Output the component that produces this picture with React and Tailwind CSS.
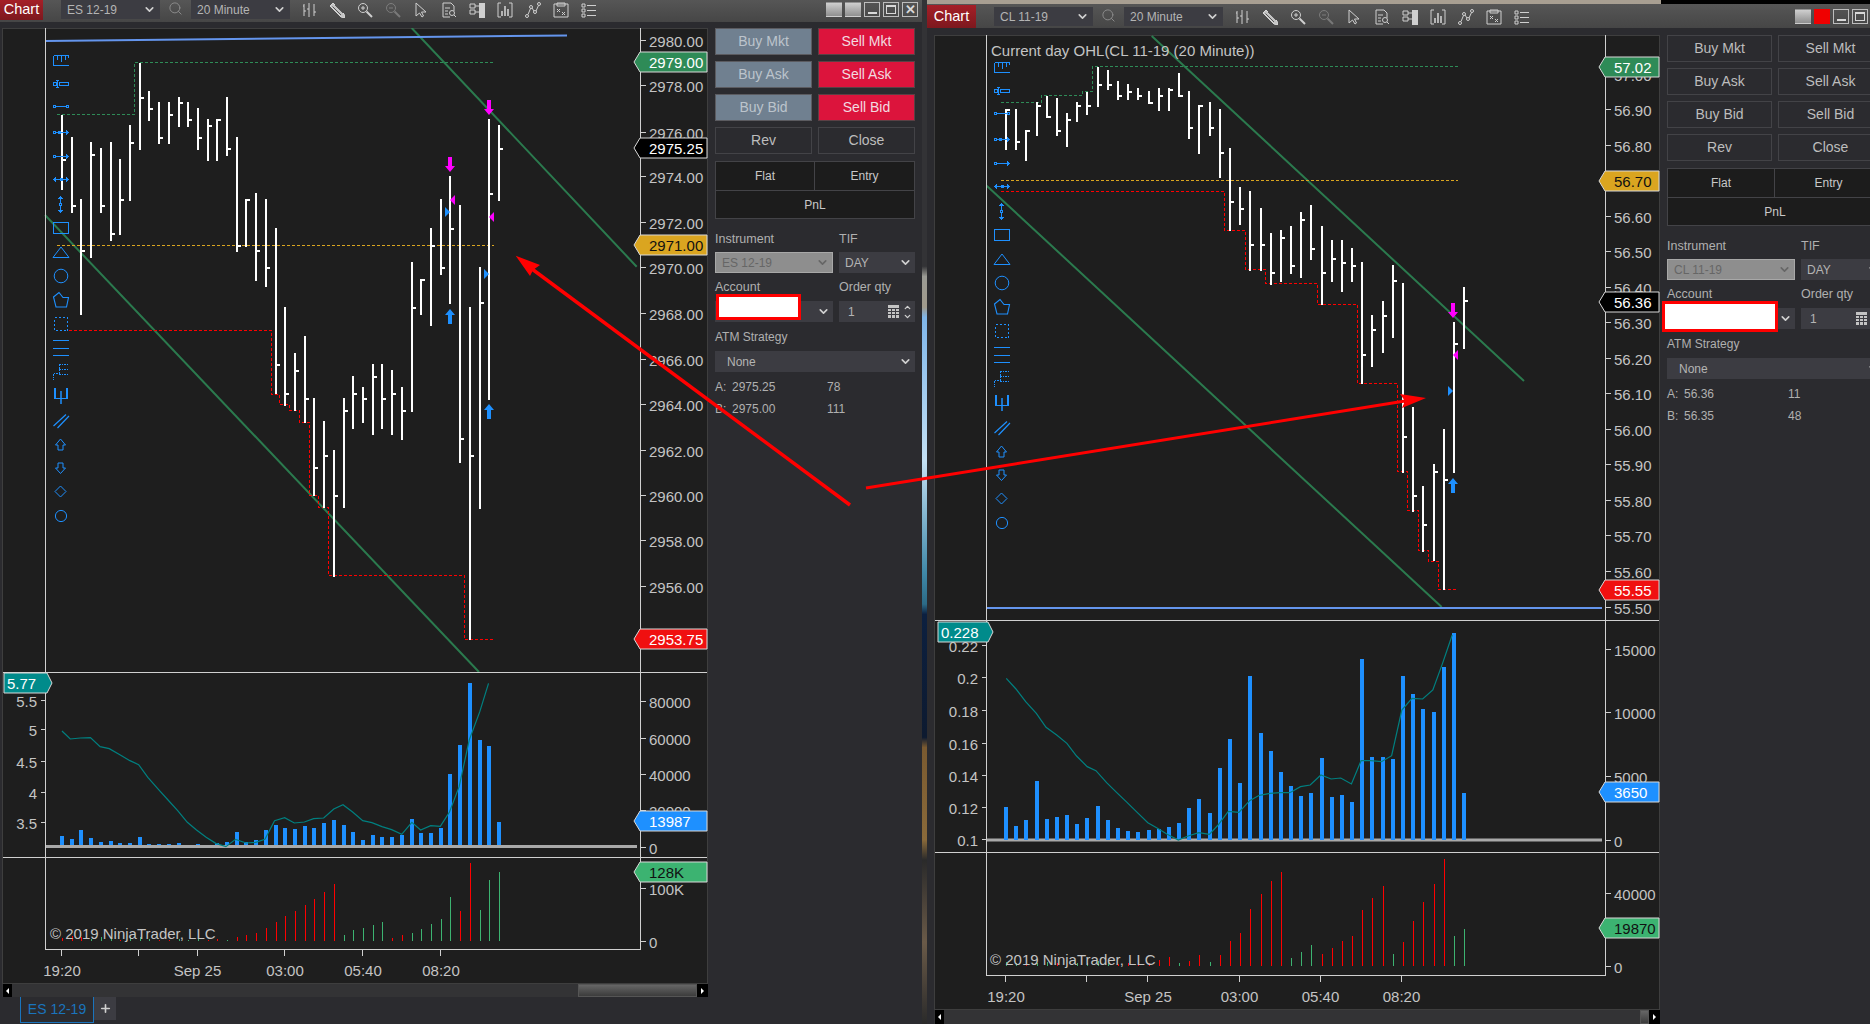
import React from "react";
import { ChevronDown, ChevronUp, Search, ZoomIn, ZoomOut, Plus } from "lucide-react";

const TEXT = "#c4c4c4";
const GREEN_LINE = "#2e8b57";

// bars are [top, bottom, close tick], page coordinates
const leftBars = [
  [115, 190, 160], [137, 213, 206], [199, 315, 251], [142, 258, 155], [148, 213, 206], [142, 241, 234],
  [159, 235, 200], [125, 201, 143], [63, 150, 98], [91, 121, 109], [102, 144, 138], [102, 144, 115],
  [97, 127, 103], [102, 127, 120], [108, 150, 138], [119, 161, 126], [119, 161, 120], [97, 156, 149],
  [137, 252, 246], [199, 247, 200], [193, 281, 251], [199, 287, 268], [228, 394, 365], [307, 406, 394],
  [353, 411, 371], [336, 423, 399], [398, 496, 468], [421, 508, 456], [450, 577, 496], [398, 508, 411],
  [376, 429, 394], [387, 423, 399], [364, 435, 377], [364, 429, 399], [370, 435, 394], [387, 440, 411],
  [262, 412, 308], [279, 315, 280], [228, 326, 246], [199, 275, 268], [176, 304, 229], [205, 463, 439],
  [307, 640, 456], [267, 509, 303], [119, 400, 194], [125, 201, 149],
];

const rightBars = [
  [109, 150, 110], [109, 150, 142], [130, 161, 131], [102, 136, 106], [96, 118, 117], [98, 136, 131],
  [113, 147, 120], [102, 122, 106], [92, 115, 106], [67, 107, 85], [70, 90, 85], [81, 100, 96],
  [84, 100, 92], [88, 100, 96], [91, 104, 103], [88, 111, 96], [88, 111, 90], [73, 97, 96],
  [91, 139, 128], [105, 154, 106], [102, 136, 128], [109, 178, 153], [148, 231, 202], [187, 225, 209],
  [191, 271, 245], [208, 271, 245], [233, 285, 273], [230, 282, 238], [226, 274, 266], [212, 278, 220],
  [205, 260, 249], [226, 305, 273], [240, 282, 259], [240, 292, 263], [248, 282, 266], [262, 384, 355],
  [315, 367, 330], [301, 353, 316], [265, 338, 281], [283, 473, 437], [407, 512, 496], [486, 552, 525],
  [464, 561, 472], [429, 590, 480], [322, 473, 344], [287, 349, 301],
];

const leftVolume = [528, 537, 510, 534, 546, 543, 549, 549, 532, 552, 552, 552, 549, 555, 552, 555, 550, 546, 516, 546, 540, 510, 495, 504, 507, 498, 504, 489, 480, 495, 516, 540, 525, 531, 531, 525, 477, 519, 519, 504, 342, 255, 69, 240, 258, 486];
const rightVolume = [591, 648, 630, 513, 627, 621, 615, 642, 624, 588, 630, 654, 663, 666, 660, 657, 651, 639, 594, 567, 609, 474, 387, 519, 198, 369, 423, 486, 528, 558, 549, 444, 561, 555, 576, 147, 441, 441, 447, 198, 252, 297, 306, 171, 69, 549];

const leftTeal = [[135, 213], [153, 237], [175, 234], [197, 233], [218, 260], [238, 266], [262, 285], [283, 302], [302, 314], [322, 352], [345, 388], [366, 420], [387, 452], [408, 487], [428, 510], [449, 532], [470, 550], [492, 560], [513, 538], [536, 549], [557, 547], [577, 538], [598, 482], [620, 473], [641, 489], [663, 486], [683, 476], [705, 474], [727, 447], [747, 434], [768, 456], [790, 482], [810, 488], [832, 500], [853, 509], [875, 523], [897, 487], [916, 510], [938, 497], [959, 499], [979, 456], [1000, 380], [1022, 240], [1045, 155], [1064, 70]];
const rightTeal = [[178, 205], [198, 237], [218, 275], [240, 310], [260, 352], [282, 375], [303, 400], [323, 438], [345, 470], [363, 482], [385, 518], [406, 548], [427, 577], [448, 607], [470, 638], [490, 655], [510, 673], [533, 690], [553, 678], [575, 668], [597, 673], [615, 645], [636, 604], [658, 607], [680, 572], [700, 556], [722, 550], [742, 548], [763, 548], [785, 530], [805, 525], [827, 495], [848, 507], [868, 504], [890, 522], [910, 452], [930, 452], [952, 455], [973, 437], [994, 300], [1015, 265], [1037, 267], [1058, 240], [1078, 160], [1098, 75]];

const leftDelta = [833, 828, 830, 838, 830, 832, 840, 832, 832, 838, 840, 840, 838, 840, 836, 840, 838, 840, 830, 825, 818, 803, 785, 768, 753, 735, 717, 696, 672, 825, 810, 804, 795, 786, 834, 825, 819, 807, 792, 777, 711, 753, 609, 750, 660, 636];
const leftDeltaColors = "rrrgggrgggrrgggrrgrrrrrrrrrrrgggggrrgggggrrggg";
const rightDelta = [1056, 1058, 1062, 1060, 1055, 1060, 1060, 1060, 1060, 1052, 1060, 1062, 1060, 1060, 1058, 1050, 1042, 1060, 1052, 1035, 1056, 1035, 993, 969, 897, 852, 813, 786, 1044, 1026, 1005, 1032, 1014, 993, 978, 900, 864, 828, 1032, 996, 933, 876, 822, 747, 978, 957];
const rightDeltaColors = "ggrggrrggggrrrrrrgrrgrrrrrrrgggrrrrrrrgrrrrrgg";

const leftChart = {
  viewBox: "2 28 706 956", width: 706, height: 956,
  box: [2, 28, 708, 984],
  axisL: 45.5, axisR: 640.5, top: 28, div1: 672.5, div2: 857.5, bottom: 949.5,
  bars: leftBars, barX: (i) => Math.round(62 + 9.71 * i),
  volume: leftVolume.map((v) => 660 + v / 3), volumeBase: 845, barW: 4,
  grayLine: [637, 846.5],
  teal: leftTeal.map(([x, y]) => [x / 2.178, 660 + y / 3]),
  delta: leftDelta.map((v) => 660 + v / 3), deltaBase: 941, deltaColors: leftDeltaColors,
  blueLine: [45, 41, 567, 35.5],
  channels: [[45, 215, 479, 672], [411.7, 28, 636.7, 266.7]],
  greenStep: "M57 114.5H134.5V62.5H493",
  redStep: "M69 330.5H271.5V394.5H279.5V404.5H289.5V410.5H299.5V422.5H309.5V495.5H318.5V507.5H328.5V575.5H464.5V639.5H494",
  orangeY: 245.5, orangeX: [57, 494],
  prices: [["2980.00", 41.5], ["2978.00", 86.5], ["2976.00", 133], ["2974.00", 177.5], ["2972.00", 223], ["2970.00", 268.5], ["2968.00", 314], ["2966.00", 360], ["2964.00", 405.5], ["2962.00", 451], ["2960.00", 496], ["2958.00", 541.5], ["2956.00", 587]],
  priceX: 649,
  tags: [
    { text: "2979.00", y: 52, x: 634, fill: "#2e8b57", color: "#fff" },
    { text: "2975.25", y: 138, x: 634, fill: "#000", color: "#fff" },
    { text: "2971.00", y: 235, x: 634, fill: "#daa520", color: "#111" },
    { text: "2953.75", y: 629, x: 634, fill: "#f01010", color: "#fff" },
    { text: "13987", y: 811, x: 634, fill: "#1e90ff", color: "#fff" },
    { text: "128K", y: 862, x: 634, fill: "#3cb371", color: "#111" },
  ],
  tagEnd: 707,
  indicatorTag: { text: "5.77", x1: 4, x2: 52, y: 673 },
  indicatorLabels: [["5.5", 701], ["5", 730], ["4.5", 762], ["4", 793], ["3.5", 823]],
  indicatorRight: 37,
  volumeLabels: [["80000", 702], ["60000", 739], ["40000", 775], ["20000", 811], ["0", 848], ["100K", 889], ["0", 942]],
  dates: [["19:20", 62], ["Sep 25", 197.5], ["03:00", 285], ["05:40", 363], ["08:20", 441]],
  dateTicks: [61.5, 138.5, 197.5, 284.5, 362.5, 440.5],
  dateY: 970,
  copyright: [50, 933],
  signals: {
    down: [[450, 157], [489, 100]], up: [[450, 309], [489, 404]],
    left: [[450, 200], [489, 217]], right: [[450, 212], [489, 274]],
  },
  tools: "translate(0 0)",
};

const rightChart = {
  viewBox: "934 35 726 975", width: 726, height: 975,
  box: [934, 35, 1660, 1010],
  axisL: 986.5, axisR: 1605.5, top: 35, div1: 620.5, div2: 852.5, bottom: 975.5,
  bars: rightBars, barX: (i) => Math.round(1006 + 10.18 * i),
  volume: rightVolume.map((v) => 610 + v / 3), volumeBase: 840, barW: 4,
  grayLine: [1602, 840],
  teal: rightTeal.map(([x, y]) => [920 + x / 2.063, 610 + y / 3]),
  delta: rightDelta.map((v) => 610 + v / 3), deltaBase: 966, deltaColors: rightDeltaColors,
  blueLine: [986, 608, 1602, 608],
  channels: [[1151.7, 36, 1524, 381], [986.7, 185.7, 1441.7, 607]],
  greenStep: "M1001 102.5H1041.5V95.5H1082.5V91.5H1092.5V66.5H1458",
  redStep: "M1001 191.5H1224.5V230.5H1245.5V269.5H1265.5V283.5H1317.5V304.5H1357.5V383.5H1397.5V471.5H1407.5V510.5H1418.5V550.5H1428.5V561.5H1438.5V589.5H1457",
  orangeY: 180.5, orangeX: [1001, 1458],
  prices: [["57.00", 75.5], ["56.90", 110.5], ["56.80", 146.5], ["56.60", 217.5], ["56.50", 252.5], ["56.40", 288], ["56.30", 323], ["56.20", 359], ["56.10", 394.5], ["56.00", 430.5], ["55.90", 465.5], ["55.80", 501], ["55.70", 536.5], ["55.60", 572], ["55.50", 608]],
  priceX: 1614,
  tags: [
    { text: "57.02", y: 57, x: 1599, fill: "#2e8b57", color: "#fff" },
    { text: "56.70", y: 171, x: 1599, fill: "#daa520", color: "#111" },
    { text: "56.36", y: 292, x: 1599, fill: "#000", color: "#fff" },
    { text: "55.55", y: 580, x: 1599, fill: "#f01010", color: "#fff" },
    { text: "3650", y: 782, x: 1599, fill: "#1e90ff", color: "#fff" },
    { text: "19870", y: 918, x: 1599, fill: "#3cb371", color: "#111" },
  ],
  tagEnd: 1659,
  indicatorTag: { text: "0.228", x1: 938, x2: 993, y: 622 },
  indicatorLabels: [["0.22", 646], ["0.2", 678], ["0.18", 711], ["0.16", 744], ["0.14", 776], ["0.12", 808], ["0.1", 840]],
  indicatorRight: 978,
  volumeLabels: [["15000", 650], ["10000", 713], ["5000", 777], ["0", 841], ["40000", 894], ["0", 967]],
  dates: [["19:20", 1006], ["Sep 25", 1148], ["03:00", 1239.5], ["05:40", 1320.5], ["08:20", 1401.5]],
  dateTicks: [1005.5, 1086.5, 1147.5, 1239.5, 1320.5, 1401.5],
  dateY: 996,
  copyright: [990, 959],
  title: ["Current day OHL(CL 11-19 (20 Minute))", 991, 50],
  signals: { down: [[1453, 303]], up: [[1453, 478]], left: [[1453, 355]], right: [[1453, 391]] },
  tools: "translate(941 7)",
};

// the drawing tool column, blue icons
function ToolIcons({ transform }) {
  const blue = "#1e90ff";
  return (
    <g transform={transform} fill="none" stroke={blue} strokeWidth="1" shapeRendering="crispEdges">
      <path d="M53.5 55.5H68.5V58M53.5 55.5V65.5H69M57 56V60M61 56V62M65 56V60" />
      <rect x="53.5" y="82.5" width="3" height="3" />
      <path d="M57.5 80V88M56 80.5H59M56 87.5H59" />
      <rect x="59.5" y="82.5" width="9" height="3" />
      <rect x="53.5" y="105.5" width="2" height="2" /><path d="M56 106.5H66" /><rect x="66.5" y="105.5" width="2" height="2" />
      <rect x="53.5" y="131.5" width="2" height="2" /><rect x="58.5" y="131.5" width="2" height="2" /><path d="M56 132.5H68M66 130.5L68.5 132.5L66 134.5" />
      <rect x="53.5" y="155.5" width="2" height="2" /><path d="M56 156.5H68M66 154.5L68.5 156.5L66 158.5" />
      <path d="M53.5 179.5H68.5M56 177.5L53.5 179.5L56 181.5M66 177.5L68.5 179.5L66 181.5" /><rect x="60" y="178.5" width="2" height="2" />
      <path d="M60.5 197V212M58.5 199L60.5 197L62.5 199M58.5 210L60.5 212L62.5 210" /><rect x="59.5" y="203.5" width="2" height="2" fill="#1e1e1e" />
      <rect x="53.5" y="222.5" width="15" height="11" />
      <path d="M61 247L69 257.5H53Z" shapeRendering="auto" />
      <circle cx="61" cy="276" r="6.8" shapeRendering="auto" />
      <path d="M53.5 297L59 292.5L63 297.5H68.5L66.5 307H56Z" shapeRendering="auto" strokeWidth="1.1" />
      <rect x="54.5" y="317.5" width="13" height="13" strokeDasharray="2 2" />
      <path d="M53 340.5H69M53 348H69M53 355.5H69" />
      <path d="M59 364.5H69M59 369.5H69M59 374.5H69M59 364.5V374.5M53.5 373.5H58M53.5 374V380" strokeDasharray="1.5 1" />
      <path d="M55 388V398.5H67V388" strokeWidth="1.2" /><path d="M61 391V404" strokeWidth="2" opacity="0.75" />
      <path d="M53.5 426L66 414.5M57.5 428L69 416" shapeRendering="auto" strokeWidth="1.2" />
      <path d="M60.5 439L65.5 445H63V450H58V445H55.5Z" shapeRendering="auto" />
      <path d="M58 463H63V468H65.5L60.5 473.5L55.5 468H58Z" shapeRendering="auto" />
      <path d="M60.5 486L66 491.5L60.5 497L55 491.5Z" shapeRendering="auto" />
      <circle cx="61" cy="516" r="5.6" shapeRendering="auto" />
    </g>
  );
}

function PriceTag({ text, x, y, fill, color, end }) {
  return (
    <g>
      <polygon points={`${x},${y + 10} ${x + 6},${y} ${end},${y} ${end},${y + 20} ${x + 6},${y + 20}`} fill={fill} stroke="#d8d8d8" strokeWidth="1" />
      <text x={x + 15} y={y + 10.5} fill={color} fontSize="15" dominantBaseline="central">{text}</text>
    </g>
  );
}

function ChartPlot({ c }) {
  const [bx1, by1, bx2, by2] = c.box;
  const tag = c.indicatorTag;
  return (
    <svg viewBox={c.viewBox} width={c.width} height={c.height} className="block shrink-0">
      <rect x={bx1 + 0.5} y={by1 + 0.5} width={bx2 - bx1 - 1} height={by2 - by1 - 1} fill="#1e1e1e" stroke="#3e3e3e" />

      {/* channels + trend line */}
      {c.channels.map((l, i) => (
        <line key={i} x1={l[0]} y1={l[1]} x2={l[2]} y2={l[3]} stroke={GREEN_LINE} strokeWidth="2" opacity="0.85" />
      ))}
      <line x1={c.blueLine[0]} y1={c.blueLine[1]} x2={c.blueLine[2]} y2={c.blueLine[3]} stroke="#6495ed" strokeWidth="2" />

      {/* day open/high/low */}
      <path d={c.greenStep} fill="none" stroke={GREEN_LINE} strokeDasharray="3 2" shapeRendering="crispEdges" />
      <path d={c.redStep} fill="none" stroke="#ff0000" strokeDasharray="3 2" shapeRendering="crispEdges" />
      <line x1={c.orangeX[0]} y1={c.orangeY} x2={c.orangeX[1]} y2={c.orangeY} stroke="#daa520" strokeDasharray="3 2" shapeRendering="crispEdges" />

      {/* price bars */}
      {c.bars.map(([t, b, k], i) => {
        const x = c.barX(i);
        return (
          <g key={i} fill="#fff" shapeRendering="crispEdges">
            <rect x={x - 1} y={t} width="2" height={b - t} />
            <rect x={x + 1} y={k - 1} width="3" height="2" />
          </g>
        );
      })}

      <ToolIcons transform={c.tools} />

      {/* trade markers */}
      {c.signals.down.map(([x, y], i) => (
        <polygon key={i} fill="#ff00ff" points={`${x - 2},${y} ${x + 2},${y} ${x + 2},${y + 9} ${x + 5},${y + 9} ${x},${y + 15} ${x - 5},${y + 9} ${x - 2},${y + 9}`} />
      ))}
      {c.signals.up.map(([x, y], i) => (
        <polygon key={i} fill="#1e90ff" points={`${x - 2},${y + 15} ${x + 2},${y + 15} ${x + 2},${y + 6} ${x + 5},${y + 6} ${x},${y} ${x - 5},${y + 6} ${x - 2},${y + 6}`} />
      ))}
      {c.signals.left.map(([x, y], i) => (
        <polygon key={i} fill="#ff00ff" points={`${x},${y} ${x + 5},${y - 5} ${x + 5},${y + 5}`} />
      ))}
      {c.signals.right.map(([x, y], i) => (
        <polygon key={i} fill="#1e90ff" points={`${x},${y} ${x - 5},${y - 5} ${x - 5},${y + 5}`} />
      ))}

      {/* volume and teal line */}
      <rect x={c.axisL} y={c.grayLine[1] - 1.5} width={c.grayLine[0] - c.axisL} height="3" fill="#a9a9a9" />
      {c.volume.map((t, i) => (
        <rect key={i} x={c.barX(i) - 2} y={t} width={c.barW} height={c.volumeBase - t} fill="#1e90ff" shapeRendering="crispEdges" />
      ))}
      <polyline points={c.teal.map((p) => p.join(",")).join(" ")} fill="none" stroke="#008080" strokeWidth="1.2" />

      {/* delta */}
      {c.delta.map((t, i) => (
        <rect key={i} x={c.barX(i)} y={t} width="1" height={c.deltaBase - t} fill={c.deltaColors[i] === "r" ? "#ff0000" : "#3cb371"} shapeRendering="crispEdges" />
      ))}

      {/* frame */}
      <g stroke="#d0d0d0" strokeWidth="1" shapeRendering="crispEdges">
        <line x1={c.axisL} y1={c.top} x2={c.axisL} y2={c.bottom} />
        <line x1={c.axisR} y1={c.top} x2={c.axisR} y2={c.bottom} />
        <line x1={bx1 + 1} y1={c.div1} x2={bx2 - 1} y2={c.div1} />
        <line x1={bx1 + 1} y1={c.div2} x2={bx2 - 1} y2={c.div2} />
        <line x1={c.axisL} y1={c.bottom} x2={c.axisR} y2={c.bottom} />
        {c.dateTicks.map((x) => <line key={x} x1={x} y1={c.bottom} x2={x} y2={c.bottom + 6} />)}
        {[...c.prices, ...c.volumeLabels].map(([t, y], i) => <line key={i} x1={c.axisR} y1={Math.round(y - 1.5) + 0.5} x2={c.axisR + 5} y2={Math.round(y - 1.5) + 0.5} />)}
        {c.indicatorLabels.map(([t, y], i) => <line key={i} x1={c.axisL - 5} y1={Math.round(y - 1.5) + 0.5} x2={c.axisL} y2={Math.round(y - 1.5) + 0.5} />)}
      </g>

      {/* axis text */}
      <g fill={TEXT} fontSize="15" dominantBaseline="central">
        {c.prices.map(([t, y]) => <text key={t} x={c.priceX} y={y} dominantBaseline="central">{t}</text>)}
        {c.volumeLabels.map(([t, y], i) => <text key={i} x={c.priceX} y={y} dominantBaseline="central">{t}</text>)}
        {c.indicatorLabels.map(([t, y]) => <text key={t} x={c.indicatorRight} y={y} textAnchor="end" dominantBaseline="central">{t}</text>)}
        {c.dates.map(([t, x]) => <text key={t} x={x} y={c.dateY} textAnchor="middle" dominantBaseline="central">{t}</text>)}
        <text x={c.copyright[0]} y={c.copyright[1]} dominantBaseline="central">© 2019 NinjaTrader, LLC</text>
        {c.title && <text x={c.title[1]} y={c.title[2]} dominantBaseline="central">{c.title[0]}</text>}
      </g>

      {c.tags.map((t) => <PriceTag key={t.text} {...t} end={c.tagEnd} />)}
      <polygon points={`${tag.x1},${tag.y} ${tag.x2 - 5},${tag.y} ${tag.x2},${tag.y + 10} ${tag.x2 - 5},${tag.y + 20} ${tag.x1},${tag.y + 20}`} fill="#008b8b" stroke="#d8d8d8" />
      <text x={tag.x1 + 3} y={tag.y + 10.5} fill="#fff" fontSize="15" dominantBaseline="central">{tag.text}</text>
    </svg>
  );
}

// toolbar glyphs, 16x16
const toolbarIcons = [
  <path key="a" d="M3 2V14M2 4H3M8 1V15M6 7H8M13 2V14M13 10H15M3 9H5" />,
  <g key="b"><path d="M4 1L1 4L12 15L16 16L15 12Z" fill="#c4c4c4" stroke="#d8d8d8" /><path d="M3.5 4.5L12 13M6 3L14 11" stroke="#555" /></g>,
  <g key="c"><circle cx="6" cy="6" r="4.5" /><path d="M4 6H8M6 4V8" /><path d="M9.5 9.5L15 15" strokeWidth="2" /></g>,
  <g key="d" opacity="0.35"><circle cx="6" cy="6" r="4.5" /><path d="M4 6H8" /><path d="M9.5 9.5L15 15" strokeWidth="2" /></g>,
  <path key="e" d="M3 1V14L6.5 11L9 15L10.5 14L8.5 10H13Z" />,
  <g key="f"><path d="M2 1H10L13 4V9M2 1V15H9" /><path d="M4 6H9M4 9H7M4 12H7" /><circle cx="11" cy="11" r="2.5" /><path d="M13 13L15 15" /></g>,
  <g key="g"><path d="M1 2H6V6H1ZM1 8H6V12H1Z" /><path d="M6 4H10M6 10H10" /><rect x="10" y="1" width="6" height="15" fill="#cfcfcf" stroke="none" /></g>,
  <g key="h"><path d="M4 1H1V15H4M12 1H15V15H12" /><path d="M5 9V14M8 4V14M11 7V14" strokeWidth="1.6" /></g>,
  <g key="i"><circle cx="2" cy="14" r="1.5" /><circle cx="6" cy="5" r="1.5" /><circle cx="10" cy="10" r="1.5" /><circle cx="14" cy="2" r="1.5" /><path d="M3 12.5L5.5 6.5M7 6L9 9M11 9L13.5 3.5" /></g>,
  <g key="j"><path d="M1 2H15V15H1Z" /><path d="M4 1H12V4H4ZM4 7L7 10M7 7L4 10M9 10L12 13M12 10L9 13" /></g>,
  <g key="k"><path d="M1 2H4V5H1ZM1 7H4V10H1ZM1 12H4V15H1Z" /><path d="M6 3.5H15M6 8.5H15M6 13.5H15" /></g>,
];

function Dropdown({ label, className }) {
  return (
    <div className={`h-[19px] w-[99px] flex items-center justify-between pl-[6px] pr-[4px] text-[12px] text-[#b4b4b4] bg-[#3c3c42] ${className || ""}`}>
      <span>{label}</span>
      <ChevronDown size={13} strokeWidth={3} className="text-[#d0d0d0]" />
    </div>
  );
}

function WindowButton({ className, children }) {
  return (
    <div className={`w-[16px] h-[15px] flex items-center justify-center border border-[#bdbdbd] ${className || ""}`}>
      {children}
    </div>
  );
}

function TitleBar({ symbol, height, chartWidth, chartHeight, right }) {
  return (
    <div className={`${height} flex items-start bg-gradient-to-b from-[#565656] to-[#464646] shrink-0`}>
      <div className={`${chartWidth} ${chartHeight} flex items-center justify-center text-[14.5px] text-white bg-gradient-to-b from-[#a51f27] to-[#7d181e] shrink-0`}>Chart</div>
      <div className={`flex-1 flex items-start min-w-0 ${right ? "pt-[3px]" : ""}`}>
        <Dropdown label={symbol} className="ml-[18px] shrink-0" />
        <Search size={15} strokeWidth={1.6} className="mx-[8px] mt-[1px] text-[#8a8a8a] shrink-0" />
        <Dropdown label="20 Minute" className="shrink-0" />
        <div className="ml-[11px] flex gap-[12px] shrink-0 mt-[2px]">
          {toolbarIcons.map((icon, i) => (
            <svg key={i} viewBox="0 0 16 16" className="w-[16px] h-[16px]" fill="none" stroke="#cfcfcf" strokeWidth="1">{icon}</svg>
          ))}
        </div>
        <div className={`ml-auto flex gap-[3px] shrink-0 mt-[2px] ${right ? "mr-[2px]" : "mr-[4px]"}`}>
          <WindowButton className="bg-gradient-to-b from-[#cfcfcf] to-[#8f8f8f] border-transparent" />
          <WindowButton className={right ? "bg-[#f00000] border-transparent" : "bg-gradient-to-b from-[#cfcfcf] to-[#8f8f8f] border-transparent"} />
          <WindowButton><span className="w-[9px] h-[2px] mt-[7px] bg-[#d8d8d8]" /></WindowButton>
          <WindowButton><span className="w-[10px] h-[9px] border border-[#d8d8d8] border-t-2" /></WindowButton>
          {!right && <WindowButton><span className="text-[13px] leading-none font-bold text-[#d8d8d8]">✕</span></WindowButton>}
        </div>
      </div>
    </div>
  );
}

function OrderButton({ tone, children }) {
  const tones = {
    buy: "bg-[#708090] text-[#bcc4cc] border-[#5b5b60]",
    sell: "bg-[#dc143c] text-[#f2dbe0] border-[#5b4045]",
    plain: "bg-[#2b2b2f] text-[#bdbdbd] border-[#434347]",
  };
  return <div className={`h-[27px] flex items-center justify-center text-[14px] border ${tones[tone]}`}>{children}</div>;
}

function Field({ children, className }) {
  return <div className={`h-[21px] flex items-center justify-between pl-[6px] pr-[3px] bg-[#3c3c42] text-[12px] text-[#b4b4b4] ${className || ""}`}>{children}</div>;
}

function OrderPanel({ symbol, live, ask, askSize, bid, bidSize, widthClass, fieldCols, accountClass, sizeCol }) {
  const buyTone = live ? "buy" : "plain";
  const sellTone = live ? "sell" : "plain";
  return (
    <div className={`${widthClass} shrink-0 ml-[7px] text-[#b0b0b0]`}>
      <div className="grid grid-cols-2 gap-x-[6px] gap-y-[6px]">
        <OrderButton tone={buyTone}>Buy Mkt</OrderButton>
        <OrderButton tone={sellTone}>Sell Mkt</OrderButton>
        <OrderButton tone={buyTone}>Buy Ask</OrderButton>
        <OrderButton tone={sellTone}>Sell Ask</OrderButton>
        <OrderButton tone={buyTone}>Buy Bid</OrderButton>
        <OrderButton tone={sellTone}>Sell Bid</OrderButton>
        <OrderButton tone="plain">Rev</OrderButton>
        <OrderButton tone="plain">Close</OrderButton>
      </div>

      <div className="mt-[7px] grid grid-cols-2 bg-[#1c1c1c] border border-[#434347] text-[12px] text-[#c8c8c8]">
        <div className="h-[28px] flex items-center justify-center border-r border-[#434347]">Flat</div>
        <div className="h-[28px] flex items-center justify-center">Entry</div>
        <div className="col-span-2 h-[28px] flex items-center justify-center border-t border-[#434347]">PnL</div>
      </div>

      <div className={`mt-[12px] grid ${fieldCols} gap-x-[6px] text-[12.5px]`}>
        <div className="h-[16px] mb-[5px] leading-[16px]">Instrument</div>
        <div className="h-[16px] mb-[5px] leading-[16px]">TIF</div>
        <Field className="!bg-[#8e8e8e] border border-[#a8a8a8] !text-[#666]">
          {symbol}<ChevronDown size={13} strokeWidth={3} className="text-[#666]" />
        </Field>
        <Field>DAY<ChevronDown size={13} strokeWidth={3} className="text-[#d0d0d0]" /></Field>

        <div className="h-[16px] mt-[6px] mb-[6px] leading-[16px]">Account</div>
        <div className="h-[16px] mt-[6px] mb-[6px] leading-[16px]">Order qty</div>
        <div className="relative">
          <Field className="justify-end"><ChevronDown size={13} strokeWidth={3} className="text-[#d0d0d0]" /></Field>
          <div className={`absolute top-[-7px] bg-white border-[3px] border-[#ff0000] ${accountClass}`} />
        </div>
        <Field>
          <span className="pl-[3px]">1</span>
          <span className="flex items-center gap-[4px]">
            <svg viewBox="0 0 11 13" className="w-[11px] h-[13px]" fill="#c4c4c4">
              <path d="M0 0H11V3H0ZM0 4H3V6H0ZM4 4H7V6H4ZM8 4H11V6H8ZM0 7H3V9H0ZM4 7H7V9H4ZM8 7H11V9H8ZM0 10H3V13H0ZM4 10H7V13H4ZM8 10H11V13H8Z" />
            </svg>
            <span className="flex flex-col text-[#d0d0d0]">
              <ChevronUp size={9} strokeWidth={3.5} />
              <ChevronDown size={9} strokeWidth={3.5} />
            </span>
          </span>
        </Field>
      </div>

      <div className="mt-[7px] h-[16px] leading-[16px] text-[12px]">ATM Strategy</div>
      <Field className="mt-[6px] !pl-[12px]">None<ChevronDown size={13} strokeWidth={3} className="text-[#d0d0d0]" /></Field>

      <div className="mt-[6px] flex flex-col gap-[6px] text-[12px]">
        <div className={`h-[16px] grid ${sizeCol} items-center`}><span>A:</span><span>{ask}</span><span>{askSize}</span></div>
        <div className={`h-[16px] grid ${sizeCol} items-center`}><span>B:</span><span>{bid}</span><span>{bidSize}</span></div>
      </div>
    </div>
  );
}

function Scrollbar({ thumbClass, className }) {
  return (
    <div className={`shrink-0 flex items-stretch bg-[#333335] ${className || ""}`}>
      <div className="w-[9px] ml-[1px] bg-black flex items-center justify-center">
        <span className="w-0 h-0 border-y-[3px] border-y-transparent border-r-[3px] border-r-white" />
      </div>
      <div className={`ml-auto border border-[#555] bg-gradient-to-b from-[#666] to-[#3c3c3c] ${thumbClass}`} />
      <div className="w-[11px] bg-black flex items-center justify-center">
        <span className="w-0 h-0 border-y-[3px] border-y-transparent border-l-[3px] border-l-white" />
      </div>
    </div>
  );
}

export default function App() {
  return (
    <div className="relative w-[1870px] h-[1024px] overflow-hidden flex bg-[#2b2b2f] [font-family:'Liberation_Sans',Arial,sans-serif]">
      {/* left window */}
      <div className="w-[922px] h-full flex flex-col shrink-0">
        <TitleBar symbol="ES 12-19" height="h-[22px]" chartWidth="w-[43px]" chartHeight="h-[20px]" />
        <div className="mt-[6px] pl-[2px] flex items-start">
          <div className="flex flex-col shrink-0">
            <ChartPlot c={leftChart} />
            <Scrollbar thumbClass="w-[119px]" className="h-[13px]" />
          </div>
          <OrderPanel
            symbol="ES 12-19" live ask="2975.25" askSize="78" bid="2975.00" bidSize="111"
            widthClass="w-[200px]" fieldCols="grid-cols-[118px_76px]" accountClass="left-[1px] w-[85px] h-[26px]"
            sizeCol="grid-cols-[17px_95px_1fr]"
          />
        </div>
        <div className="flex-1 flex pl-[20px]">
          <div className="w-[74px] h-[26px] flex items-center justify-center text-[14px] text-[#1a74bd] border border-t-0 border-[#1a74bd]">ES 12-19</div>
          <div className="w-[22px] h-[23px] flex items-center justify-center bg-[#3c3c42] text-[#d0d0d0]"><Plus size={13} strokeWidth={3} /></div>
        </div>
      </div>

      {/* desktop wallpaper showing between the windows */}
      <div className="w-[5px] h-full shrink-0 bg-[linear-gradient(to_bottom,#333336_0%,#333336_26%,#9a9a94_27%,#a09a8c_30%,#7fb6ea_31%,#c4e0f4_45%,#3f88a8_56%,#2c6a86_59%,#0c2040_60%,#0d1a30_72%,#7a5a30_73%,#8a6a3a_82%,#2a2a2a_84%,#6a5a48_92%,#2a2a2a_100%)]" />

      {/* right window */}
      <div className="flex-1 min-w-0 h-full flex flex-col overflow-hidden">
        <div className="h-[4px] shrink-0 flex">
          <div className="w-[734px] bg-[#a89f92]" />
          <div className="flex-1 bg-black" />
        </div>
        <TitleBar symbol="CL 11-19" height="h-[24px]" chartWidth="w-[49px]" chartHeight="h-[23px] mt-[1px]" right />
        <div className="mt-[7px] pl-[7px] flex items-start">
          <div className="flex flex-col shrink-0">
            <ChartPlot c={rightChart} />
            <Scrollbar thumbClass="w-[9px]" className="h-[14px]" />
          </div>
          <OrderPanel
            symbol="CL 11-19" ask="56.36" askSize="11" bid="56.35" bidSize="48"
            widthClass="w-[216px]" fieldCols="grid-cols-[128px_82px]" accountClass="left-[-5px] w-[116px] h-[31px]"
            sizeCol="grid-cols-[17px_104px_1fr]"
          />
        </div>
      </div>

      {/* red annotation arrows drawn over both windows */}
      <svg className="absolute inset-0 pointer-events-none" width="1870" height="1024" viewBox="0 0 1870 1024">
        <line x1="850" y1="505" x2="532" y2="269" stroke="#ff0000" strokeWidth="3.5" />
        <polygon points="515.7,255.7 540,265 533,270 530,276" fill="#ff0000" />
        <line x1="866" y1="488" x2="1405" y2="401" stroke="#ff0000" strokeWidth="3" />
        <polygon points="1426,398 1400,394 1405,401 1402,408" fill="#ff0000" />
      </svg>
    </div>
  );
}
